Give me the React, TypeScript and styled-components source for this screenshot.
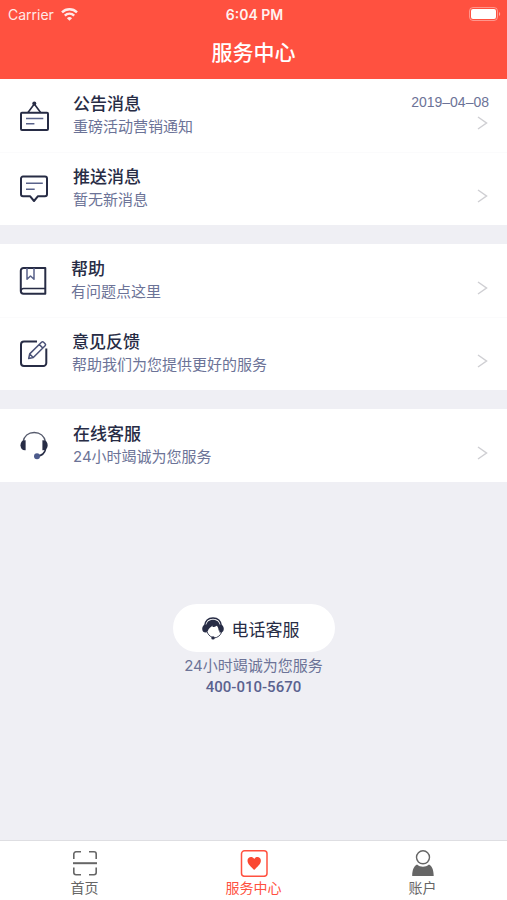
import React from "react";
import styled, { createGlobalStyle } from "styled-components";

const INK = "#272c45";
const SLATE = "#6c7397";
const RED = "#ff5140";
const GREY = "#666666";

const GlobalStyle = createGlobalStyle`
  *, *::before, *::after { box-sizing: border-box; }
  body {
    margin: 0;
    background: #efeff4;
    font-family: Inter, "Noto Sans CJK SC", sans-serif;
  }
  a { color: inherit; text-decoration: none; }
  svg { display: block; flex: none; }
`;

const Page = styled.div`
  display: flex;
  flex-direction: column;
  min-height: 100vh;
`;

const Header = styled.header`
  background: ${RED};
  color: #fff;
`;

const StatusBar = styled.div`
  display: grid;
  grid-template-columns: 1fr auto 1fr;
  align-items: center;
  height: 28px;
  padding: 0 6px 0 8px;
  font-size: 14px;
`;

const Carrier = styled.span`
  display: flex;
  align-items: center;
  gap: 7px;
  opacity: 0.88;
`;

const Clock = styled.time`
  font-weight: 600;
  opacity: 0.92;
`;

const Battery = styled.span`
  justify-self: end;
`;

const PageTitle = styled.h1`
  display: flex;
  align-items: center;
  justify-content: center;
  height: 51px;
  margin: 0;
  padding-bottom: 2px;
  font-size: 21px;
  font-weight: 500;
  line-height: 32px;
`;

const Groups = styled.main`
  flex: 1;
  display: flex;
  flex-direction: column;
  gap: 19px;
`;

const Group = styled.section`
  background: #fff;
`;

const Row = styled.a`
  display: flex;
  align-items: center;
  gap: 24px;
  padding: 14px 18px 14px 19px;

  & + & {
    box-shadow: inset 0 1px #fbfbfc;
  }
`;

const RowText = styled.span`
  flex: 1;
  display: flex;
  flex-direction: column;
`;

const RowTitle = styled.span`
  font-size: 17px;
  font-weight: 500;
  line-height: 23px;
  color: ${INK};
`;

const Note = styled.span`
  font-size: 15px;
  line-height: 22px;
  color: ${SLATE};
`;

const RowEnd = styled.span`
  display: flex;
  flex-direction: column;
  align-items: flex-end;
  justify-content: flex-end;
  align-self: stretch;
  gap: 5px;
  padding-bottom: 8px;
`;

const DateText = styled.time`
  font-family: "Liberation Sans", sans-serif;
  font-size: 14px;
  line-height: 18px;
  color: ${SLATE};
`;

const Contact = styled.section`
  display: flex;
  flex-direction: column;
  align-items: center;
  margin-top: 103px;
`;

const CallButton = styled.button`
  display: flex;
  align-items: center;
  gap: 8px;
  height: 48px;
  margin-bottom: 3px;
  padding: 0 35px 0 29px;
  border: 0;
  border-radius: 24px;
  background: #fff;
  color: ${INK};
  font: inherit;
  font-size: 17px;
`;

const PhoneNumber = styled.a`
  font-family: Roboto, sans-serif;
  font-size: 15px;
  font-weight: 500;
  line-height: 20px;
  color: #5a628f;
`;

const TabBar = styled.nav`
  display: grid;
  grid-template-columns: repeat(3, 1fr);
  border-top: 1px solid #dedee2;
  background: #fff;
`;

const Tab = styled.a<{ $active?: boolean }>`
  display: flex;
  flex-direction: column;
  align-items: center;
  padding: 8px 0 1px;
  font-size: 14px;
  line-height: 22px;
  color: ${(p) => (p.$active ? RED : GREY)};
`;

const Line = styled.svg`
  fill: none;
  stroke: ${INK};
  stroke-width: 2;
  stroke-linejoin: round;
`;

const WifiIcon = () => (
  <svg width="17" height="13" viewBox="0 0 17 13" fill="none" stroke="#fff" strokeWidth="2.4">
    <path d="M1 4.4a10.6 10.6 0 0 1 15 0" />
    <path d="M3.8 7.6a6.7 6.7 0 0 1 9.4 0" />
    <path d="M8.5 12.8 5.9 10.2a3.7 3.7 0 0 1 5.2 0z" fill="#fff" stroke="none" />
  </svg>
);

const BatteryIcon = () => (
  <svg width="32" height="14" viewBox="0 0 32 14">
    <rect x="0.5" y="0.5" width="28" height="13" rx="3.5" fill="none" stroke="#fff" strokeOpacity="0.4" />
    <rect x="2" y="2" width="25" height="10" rx="2" fill="#fff" />
    <path d="M30 5c1.6.6 1.6 3.4 0 4z" fill="#fff" fillOpacity="0.5" />
  </svg>
);

const SignIcon = () => (
  <Line width="30" height="31" viewBox="0 0 30 31">
    <rect x="2" y="12.8" width="27" height="17.2" rx="1" />
    <path d="m9 12.5 6.3-8.5 6.3 8.5" strokeWidth="1.6" />
    <circle cx="15.3" cy="3.6" r="2" fill={INK} stroke="none" />
    <path d="M7 18.5h17.3M7 23.7h8.4" stroke="#59628a" strokeWidth="1.6" />
  </Line>
);

const MessageIcon = () => (
  <Line width="30" height="31" viewBox="0 0 30 31">
    <path d="M4 3.5h22a2 2 0 0 1 2 2v15.7a2 2 0 0 1-2 2h-7L15 28l-4-4.8H4a2 2 0 0 1-2-2V5.5a2 2 0 0 1 2-2z" />
    <path d="M7 10.2h16.8M7 16.2h8.7" stroke="#59628a" strokeWidth="1.6" />
  </Line>
);

const BookIcon = () => (
  <Line width="28" height="31" viewBox="0 0 28 31">
    <path d="M4.5 3H26.3v25.7H4.5a2.7 2.7 0 0 1-2.7-2.7V5.7A2.7 2.7 0 0 1 4.5 3z" />
    <path d="M2 26c0-1.7 1-2.5 2.5-2.5h21.8" strokeWidth="1.6" />
    <path d="M8 3v11.3l3.5-3.3 3.5 3.3V3" stroke="#59628a" strokeWidth="1.5" />
  </Line>
);

const EditIcon = () => (
  <Line width="29" height="31" viewBox="0 0 29 31">
    <path d="M18 3.5H5a3 3 0 0 0-3 3v18.5a3 3 0 0 0 3 3h19.3a3 3 0 0 0 3-3V10.5" />
    <path
      d="m9.7 20.5 1-4.6L22.5 4.2a1.5 1.5 0 0 1 2.1 0l1.5 1.5a1.5 1.5 0 0 1 0 2.1L14.3 19.5zM20.3 6.5l3.6 3.6M10.7 16l3.5 3.5"
      stroke="#4a5278"
      strokeWidth="1.5"
    />
  </Line>
);

const HeadsetIcon = () => (
  <svg width="30" height="31" viewBox="0 0 30 31" fill="none">
    <path d="M4 12C5 6 9.5 2.5 15.2 2.5S25.5 6 26.5 12" stroke="#555a6c" strokeWidth="1.5" />
    <path d="M6.6 10.2v10C3.5 20.5 1.5 18.5 1.5 15.2s2-5.3 5.1-5z" fill={INK} />
    <path d="M23.4 10.2v10c3.1.3 5.3-1.7 5.3-5s-2.2-5.3-5.3-5z" fill={INK} />
    <path d="M26.6 19c-.8 4.2-4 6.6-8.3 7.2" stroke={INK} strokeWidth="1.5" />
    <circle cx="18" cy="26.2" r="3" fill="#4d5b8c" />
  </svg>
);

const AgentIcon = () => (
  <svg width="22" height="23" viewBox="0 0 22 23" fill="none">
    <path d="M2.6 9C3.2 3.8 6.5 1 11 1s7.8 2.8 8.4 8" stroke={INK} strokeWidth="1.4" />
    <path
      d="M4 8.8C4.5 5 7.3 2.8 11 2.8S17.5 5 18 8.8v4.7h-1.4c0-2-.6-3.5-1.8-4.8-1.3 1-3 1.3-4.6 1.2l1-1.3C8.8 10 6.7 11 5.6 14.4L4 15z"
      fill={INK}
    />
    <path
      d="M4.6 7.5v8C1.5 16 .2 14 .2 11.7s1.5-4.5 4.4-4.2zM17.4 7.5v8c3.1.5 4.4-1.5 4.4-3.8s-1.5-4.5-4.4-4.2z"
      fill={INK}
    />
    <path d="M5 14.5c.8 2.7 2.5 4.6 5 5.7M19.6 15c-.9 3.3-3.8 5.8-8 6" stroke={INK} strokeWidth="0.9" />
    <circle cx="11" cy="20.9" r="1.7" fill={INK} />
  </svg>
);

const ChevronIcon = () => (
  <svg width="12" height="14" viewBox="0 0 12 14" fill="none" stroke="#cfcfd3" strokeWidth="1.5">
    <path d="m1 1 8.5 6L1 13" />
  </svg>
);

const ScanIcon = () => (
  <svg width="28" height="28" viewBox="0 0 28 28" fill="none" stroke={GREY} strokeWidth="1.6">
    <path d="M2.8 10V5a2.2 2.2 0 0 1 2.2-2.2h5M18 2.8h5A2.2 2.2 0 0 1 25.2 5v5M25.2 18.5v5a2.2 2.2 0 0 1-2.2 2.2h-5M10 25.7H5a2.2 2.2 0 0 1-2.2-2.2v-5" />
    <path d="M2 14.2h24" strokeWidth="2" />
  </svg>
);

const HeartIcon = () => (
  <svg width="28" height="28" viewBox="0 0 28 28" fill="none">
    <rect x="1.5" y="1.8" width="25.5" height="25.5" rx="3" stroke={RED} strokeWidth="1.5" />
    <path
      d="M14.2 21C11.5 17.8 7.5 15.5 7.5 11.7c0-3.9 4.8-5 6.7-1.7 1.9-3.3 6.7-2.2 6.7 1.7 0 3.8-4 6.1-6.7 9.3z"
      fill="#fa4832"
    />
  </svg>
);

const PersonIcon = () => (
  <svg width="28" height="28" viewBox="0 0 28 28" fill="none">
    <circle cx="14" cy="8.3" r="6.5" stroke={GREY} strokeWidth="1.4" />
    <path d="M8 15.5c3.5 3 8.5 3 12 0 3 1.5 4.7 5.5 4.7 11.5H3.2C3.2 21 5 17 8 15.5z" fill={GREY} />
  </svg>
);

type Item = { icon: React.ReactNode; title: string; note: string; date?: string };

const groups: Item[][] = [
  [
    { icon: <SignIcon />, title: "公告消息", note: "重磅活动营销通知", date: "2019–04–08" },
    { icon: <MessageIcon />, title: "推送消息", note: "暂无新消息" },
  ],
  [
    { icon: <BookIcon />, title: "帮助", note: "有问题点这里" },
    { icon: <EditIcon />, title: "意见反馈", note: "帮助我们为您提供更好的服务" },
  ],
  [{ icon: <HeadsetIcon />, title: "在线客服", note: "24小时竭诚为您服务" }],
];

export default function App() {
  return (
    <Page>
      <GlobalStyle />
      <Header>
        <StatusBar>
          <Carrier>
            Carrier
            <WifiIcon />
          </Carrier>
          <Clock>6:04 PM</Clock>
          <Battery>
            <BatteryIcon />
          </Battery>
        </StatusBar>
        <PageTitle>服务中心</PageTitle>
      </Header>
      <Groups>
        {groups.map((items, i) => (
          <Group key={i}>
            {items.map((item) => (
              <Row key={item.title} href="#">
                {item.icon}
                <RowText>
                  <RowTitle>{item.title}</RowTitle>
                  <Note>{item.note}</Note>
                </RowText>
                <RowEnd>
                  {item.date && <DateText>{item.date}</DateText>}
                  <ChevronIcon />
                </RowEnd>
              </Row>
            ))}
          </Group>
        ))}
        <Contact>
          <CallButton type="button">
            <AgentIcon />
            电话客服
          </CallButton>
          <Note>24小时竭诚为您服务</Note>
          <PhoneNumber href="tel:4000105670">400-010-5670</PhoneNumber>
        </Contact>
      </Groups>
      <TabBar>
        <Tab href="#">
          <ScanIcon />
          首页
        </Tab>
        <Tab href="#" $active aria-current="page">
          <HeartIcon />
          服务中心
        </Tab>
        <Tab href="#">
          <PersonIcon />
          账户
        </Tab>
      </TabBar>
    </Page>
  );
}
